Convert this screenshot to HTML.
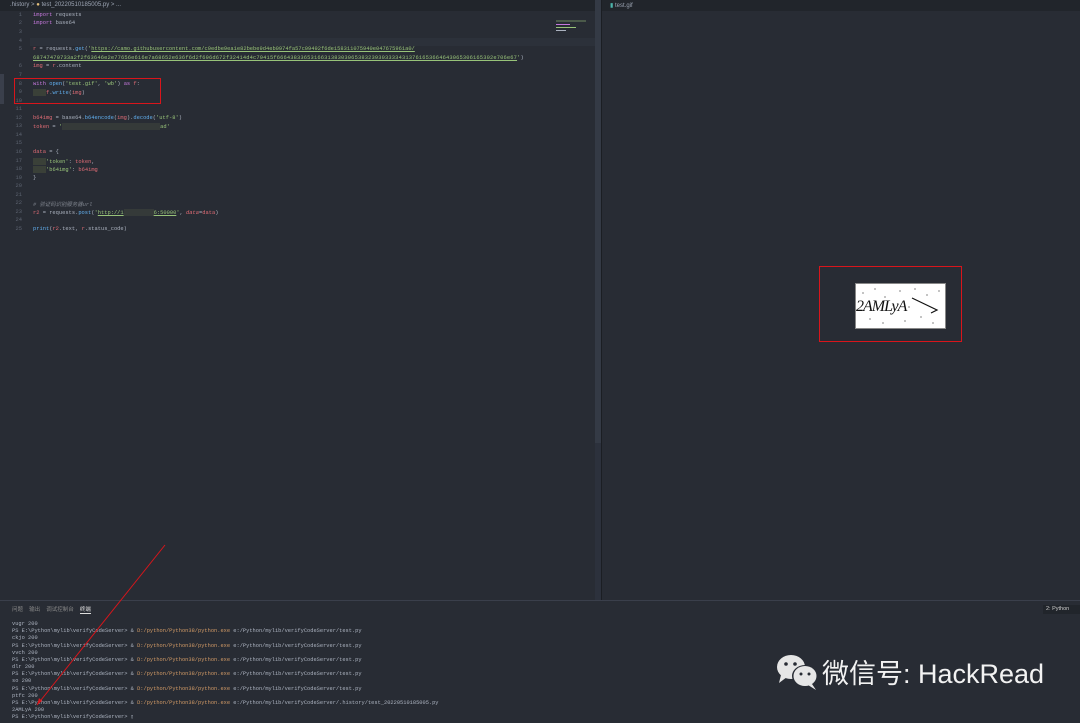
<!DOCTYPE html>
<html><head><meta charset="utf-8"><style>
*{margin:0;padding:0;box-sizing:border-box}
body{width:1080px;height:723px;background:#282c34;position:relative;overflow:hidden;font-family:"Liberation Mono",monospace;font-size:5.4px;color:#abb2bf}
.a{position:absolute;white-space:pre}
.ln{color:#5c6370;width:22px;text-align:right;left:0}
.k{color:#c678dd}.s{color:#98c379}.f{color:#61afef}.v{color:#e06c75}.o{color:#d19a66}.c{color:#7f848e;font-style:italic}
.blur{background:#3a4038;display:inline-block;height:7px;vertical-align:middle}
.t{color:#abb2bf;left:12px;font-size:5.35px}
</style></head><body>
<div class="a" style="left:0;top:0;width:600px;height:11px;background:#21252b"></div>
<div class="a" style="left:10px;top:2px;color:#9da5b4;font-family:'Liberation Sans',sans-serif;font-size:6px">.history &gt; <span style="color:#e5c07b">●</span> test_20220510185005.py &gt; ...</div>
<div class="a" style="left:30px;top:38px;width:565px;height:8px;background:#2c313a"></div>
<div class="a" style="left:595px;top:0;width:6px;height:600px;background:#2c313c"></div>
<div class="a" style="left:595px;top:0;width:6px;height:443px;background:#343a45"></div>
<div class="a" style="left:601px;top:0;width:1px;height:600px;background:#1b1e23"></div>
<div class="a" style="left:0;top:74px;width:4px;height:30px;background:#3a3f4b"></div>
<div class="a" style="left:556px;top:11px;width:40px;height:22px;">
<div style="height:2px;width:30px;background:#4b5a4a;margin-top:3px"></div><div style="height:1px;width:14px;background:#c678dd;margin-top:2px"></div><div style="height:1px;width:20px;background:#98c379;margin-top:2px"></div><div style="height:1px;width:10px;background:#abb2bf;margin-top:2px"></div></div>
<div class="a" style="left:602px;top:0;width:478px;height:11px;background:#21252b"></div>
<div class="a" style="left:610px;top:2px;color:#9da5b4;font-family:'Liberation Sans',sans-serif;font-size:6px"><span style="color:#4db6ac">▮</span> test.gif</div>

<div class="a ln" style="top:12px">1</div><div class="a" style="left:33px;top:12px"><span class="k">import</span> requests</div>
<div class="a ln" style="top:20px">2</div><div class="a" style="left:33px;top:20px"><span class="k">import</span> base64</div>
<div class="a ln" style="top:29px">3</div>
<div class="a ln" style="top:38px">4</div>
<div class="a ln" style="top:46px">5</div><div class="a" style="left:33px;top:46px"><span class="v">r</span> = requests.<span class="f">get</span>(<span class="s">'<u>https://camo.githubusercontent.com/c0edbe9ea1e82bebe9d4eb0974fa57c09492f6de158311075940e047675961a0/</u></span></div>
<div class="a" style="left:33px;top:55px;letter-spacing:0.15px"><span class="s"><u>68747470733a2f2f63646e2e77656e616e7a68652e636f6d2f696d672f32414d4c79415f6664383365316631383030653832393033334313761653664643065306165302e706e67</u>'</span>)</div>
<div class="a ln" style="top:63px">6</div><div class="a" style="left:33px;top:63px"><span class="v">img</span> = <span class="v">r</span>.content</div>
<div class="a ln" style="top:72px">7</div>
<div class="a ln" style="top:81px">8</div><div class="a" style="left:33px;top:81px"><span class="k">with</span> <span class="f">open</span>(<span class="s">'test.gif'</span>, <span class="s">'wb'</span>) <span class="k">as</span> <span class="v">f</span>:</div>
<div class="a ln" style="top:89px">9</div><div class="a" style="left:33px;top:89px"><span class="blur" style="width:13px"></span><span class="v">f</span>.<span class="f">write</span>(<span class="v">img</span>)</div>
<div class="a ln" style="top:98px">10</div>
<div class="a" style="left:14px;top:78px;width:147px;height:26px;border:1px solid #d9151b"></div>
<div class="a ln" style="top:106px">11</div>
<div class="a ln" style="top:115px">12</div><div class="a" style="left:33px;top:115px"><span class="v">b64img</span> = base64.<span class="f">b64encode</span>(<span class="v">img</span>).<span class="f">decode</span>(<span class="s">'utf-8'</span>)</div>
<div class="a ln" style="top:123px">13</div><div class="a" style="left:33px;top:123px"><span class="v">token</span> = <span class="s">'</span><span class="blur" style="width:98px;background:#353a39"></span><span class="s">ad'</span></div>
<div class="a ln" style="top:132px">14</div>
<div class="a ln" style="top:140px">15</div>
<div class="a ln" style="top:149px">16</div><div class="a" style="left:33px;top:149px"><span class="v">data</span> = {</div>
<div class="a ln" style="top:158px">17</div><div class="a" style="left:33px;top:158px"><span class="blur" style="width:13px"></span><span class="s">'token'</span>: <span class="v">token</span>,</div>
<div class="a ln" style="top:166px">18</div><div class="a" style="left:33px;top:166px"><span class="blur" style="width:13px"></span><span class="s">'b64img'</span>: <span class="v">b64img</span></div>
<div class="a ln" style="top:175px">19</div><div class="a" style="left:33px;top:175px">}</div>
<div class="a ln" style="top:183px">20</div>
<div class="a ln" style="top:192px">21</div>
<div class="a ln" style="top:200px">22</div><div class="a c" style="left:33px;top:200px"># 验证码识别服务器url</div>
<div class="a ln" style="top:209px">23</div><div class="a" style="left:33px;top:209px"><span class="v">r2</span> = requests.<span class="f">post</span>(<span class="s">'<u>http://1</u></span><span class="blur" style="width:30px;background:#353a39"></span><span class="s"><u>6:50000</u>'</span>, <span class="v" style="font-style:italic">data</span>=<span class="v">data</span>)</div>
<div class="a ln" style="top:217px">24</div>
<div class="a ln" style="top:226px">25</div><div class="a" style="left:33px;top:226px"><span class="f">print</span>(<span class="v">r2</span>.text, <span class="v">r</span>.status_code)</div>

<div class="a" style="left:819px;top:266px;width:143px;height:76px;border:1px solid #d9151b"></div>
<div class="a" style="left:855px;top:283px;width:91px;height:46px;background:#fff;border:1px solid #888"></div>
<div class="a" style="left:856px;top:298px;font-family:'Liberation Serif',serif;font-size:16px;color:#111;letter-spacing:-1px;font-style:italic">2AMLyA</div>
<svg class="a" style="left:855px;top:283px" width="91" height="46"><path d="M57 15 L82 27 L76 30" stroke="#111" stroke-width="1.2" fill="none"/><g fill="#333"><circle cx="8" cy="10" r=".6"/><circle cx="20" cy="6" r=".6"/><circle cx="30" cy="14" r=".6"/><circle cx="45" cy="8" r=".6"/><circle cx="60" cy="6" r=".6"/><circle cx="72" cy="12" r=".6"/><circle cx="84" cy="8" r=".6"/><circle cx="15" cy="36" r=".6"/><circle cx="28" cy="40" r=".6"/><circle cx="50" cy="38" r=".6"/><circle cx="66" cy="34" r=".6"/><circle cx="78" cy="40" r=".6"/><circle cx="38" cy="22" r=".6"/><circle cx="54" cy="24" r=".6"/></g></svg>

<div class="a" style="left:0;top:600px;width:1080px;height:123px;background:#282c34;border-top:1px solid #3a3f4b"></div>
<div class="a" style="left:12px;top:605px;font-family:'Liberation Sans','Noto Sans CJK SC',sans-serif;font-size:5.5px;color:#888">问题 &nbsp;&nbsp;&nbsp;输出 &nbsp;&nbsp;&nbsp;调试控制台 &nbsp;&nbsp;&nbsp;<span style="color:#ddd;border-bottom:1px solid #ddd">终端</span></div>
<div class="a" style="left:1043px;top:605px;width:37px;height:9px;background:#21252b;color:#ccc;font-family:'Liberation Sans',sans-serif;font-size:5.5px;padding:1px 3px">2: Python</div>
<div class="a t" style="top:621px;left:12px">vugr 200</div>
<div class="a t" style="top:628px">PS E:\Python\mylib\verifyCodeServer&gt; &amp; <span class="o">D:/python/Python38/python.exe</span> e:/Python/mylib/verifyCodeServer/test.py</div>
<div class="a t" style="top:635px">ckjo 200</div>
<div class="a t" style="top:643px">PS E:\Python\mylib\verifyCodeServer&gt; &amp; <span class="o">D:/python/Python38/python.exe</span> e:/Python/mylib/verifyCodeServer/test.py</div>
<div class="a t" style="top:650px">vvch 200</div>
<div class="a t" style="top:657px">PS E:\Python\mylib\verifyCodeServer&gt; &amp; <span class="o">D:/python/Python38/python.exe</span> e:/Python/mylib/verifyCodeServer/test.py</div>
<div class="a t" style="top:664px">dlr 200</div>
<div class="a t" style="top:671px">PS E:\Python\mylib\verifyCodeServer&gt; &amp; <span class="o">D:/python/Python38/python.exe</span> e:/Python/mylib/verifyCodeServer/test.py</div>
<div class="a t" style="top:678px">so 200</div>
<div class="a t" style="top:686px">PS E:\Python\mylib\verifyCodeServer&gt; &amp; <span class="o">D:/python/Python38/python.exe</span> e:/Python/mylib/verifyCodeServer/test.py</div>
<div class="a t" style="top:693px">ptfc 200</div>
<div class="a t" style="top:700px">PS E:\Python\mylib\verifyCodeServer&gt; &amp; <span class="o">D:/python/Python38/python.exe</span> e:/Python/mylib/verifyCodeServer/.history/test_20220510185005.py</div>
<div class="a t" style="top:707px">2AMLyA 200</div>
<div class="a t" style="top:714px">PS E:\Python\mylib\verifyCodeServer&gt; ▯</div>

<svg class="a" style="left:0;top:0" width="1080" height="723"><path d="M165 545 L37 705" stroke="#d9151b" stroke-width="1"/><path d="M37 705 L39 698 L42 701 Z" fill="#d9151b"/></svg>

<svg class="a" style="left:775px;top:652px" width="46" height="40"><ellipse cx="16" cy="15" rx="14" ry="12" fill="#e6e6e6"/><path d="M6 23 L4 31 L12 25 Z" fill="#e6e6e6"/><ellipse cx="30" cy="24" rx="13" ry="11" fill="#282c34"/><ellipse cx="30" cy="24" rx="11.5" ry="10" fill="#e6e6e6"/><path d="M37 32 L41 38 L33 33 Z" fill="#e6e6e6"/><circle cx="11" cy="12" r="1.8" fill="#282c34"/><circle cx="20" cy="12" r="1.8" fill="#282c34"/><circle cx="26" cy="22" r="1.5" fill="#282c34"/><circle cx="34" cy="22" r="1.5" fill="#282c34"/></svg>
<div class="a" style="left:822px;top:656px;font-family:'Liberation Sans','Noto Sans CJK SC',sans-serif;font-size:27px;color:#f2f2f2;line-height:36px">微信号: HackRead</div>
</body></html>
